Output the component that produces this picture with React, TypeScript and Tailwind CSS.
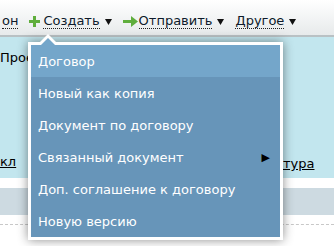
import React from 'react';

const font = { fontFamily: '"DejaVu Sans", Verdana, sans-serif' };

function Plus() {
  return (
    <svg width="11" height="11" viewBox="0 0 11 11" className="mr-[3px]">
      <rect x="4" y="0" width="3" height="11" fill="#5fae3c" />
      <rect x="0" y="4" width="11" height="3" fill="#5fae3c" />
    </svg>
  );
}

function Arrow() {
  return (
    <svg width="15" height="11" viewBox="0 0 15 11" className="mr-[1px]">
      <path d="M0 4h8V0l7 5.5-7 5.5V7H0z" fill="#5fae3c" />
    </svg>
  );
}

function Caret() {
  return (
    <svg width="7" height="6" viewBox="0 0 7 6" className="ml-[5px] mt-[2px]">
      <path d="M0 0h7L3.5 6z" fill="#111" />
    </svg>
  );
}

function Tool({ icon, label, caret = true }: { icon?: React.ReactNode; label: string; caret?: boolean }) {
  return (
    <div className="flex items-center">
      {icon}
      <span className="border-b border-dotted border-[#222] leading-[15px] text-[#0d1a2a]">{label}</span>
      {caret && <Caret />}
    </div>
  );
}

export default function App() {
  const items = [
    'Договор',
    'Новый как копия',
    'Документ по договору',
    'Связанный документ',
    'Доп. соглашение к договору',
    'Новую версию',
  ];

  return (
    <div className="relative w-[334px] h-[246px] overflow-hidden bg-white text-[13px]" style={font}>
      <div className="h-[37px] flex items-center gap-[11px] pt-[7px] pl-[2px] bg-gradient-to-b from-[#ffffff] to-[#e7eaeb] border-b-2 border-[#b9c1c4]">
        <Tool label="он" caret={false} />
        <Tool icon={<Plus />} label="Создать" />
        <Tool icon={<Arrow />} label="Отправить" />
        <Tool label="Другое" />
      </div>

      <div className="h-[141px] bg-[#c2e6ee] relative">
        <div className="pt-[11px] text-black">Прое</div>
        <div className="absolute left-0 top-[115px] text-black underline">кл</div>
        <div className="absolute left-[283px] top-[117px] text-black underline">тура</div>
      </div>
      <div className="h-[10px] bg-white" />
      <div className="h-[27px] bg-[#cddae1]" />
      <div className="mt-[9px] border-t border-dashed border-[#c8c8c8]" />

      <div className="absolute left-[28px] top-[42px] w-[255px] border-[3px] border-white bg-[#6795b9] shadow-[0_0_10px_rgba(0,0,0,0.45)]">
        <div className="absolute left-[7px] -top-[11px] w-0 h-0 border-l-[10px] border-r-[10px] border-b-[10px] border-l-transparent border-r-transparent border-b-white" />
        <div className="absolute left-[10px] -top-[7px] w-0 h-0 border-l-[7px] border-r-[7px] border-b-[7px] border-l-transparent border-r-transparent border-b-[#74a6ca]" />
        {items.map((item, i) => (
          <div
            key={item}
            className={`h-[32px] flex items-center justify-between pl-[7px] pr-[10px] pt-[2px] text-white ${i === 0 ? 'bg-[#74a6ca]' : ''}`}
          >
            <span>{item}</span>
            {i === 3 && <span className="text-black text-[11px]">▶</span>}
          </div>
        ))}
      </div>
    </div>
  );
}
